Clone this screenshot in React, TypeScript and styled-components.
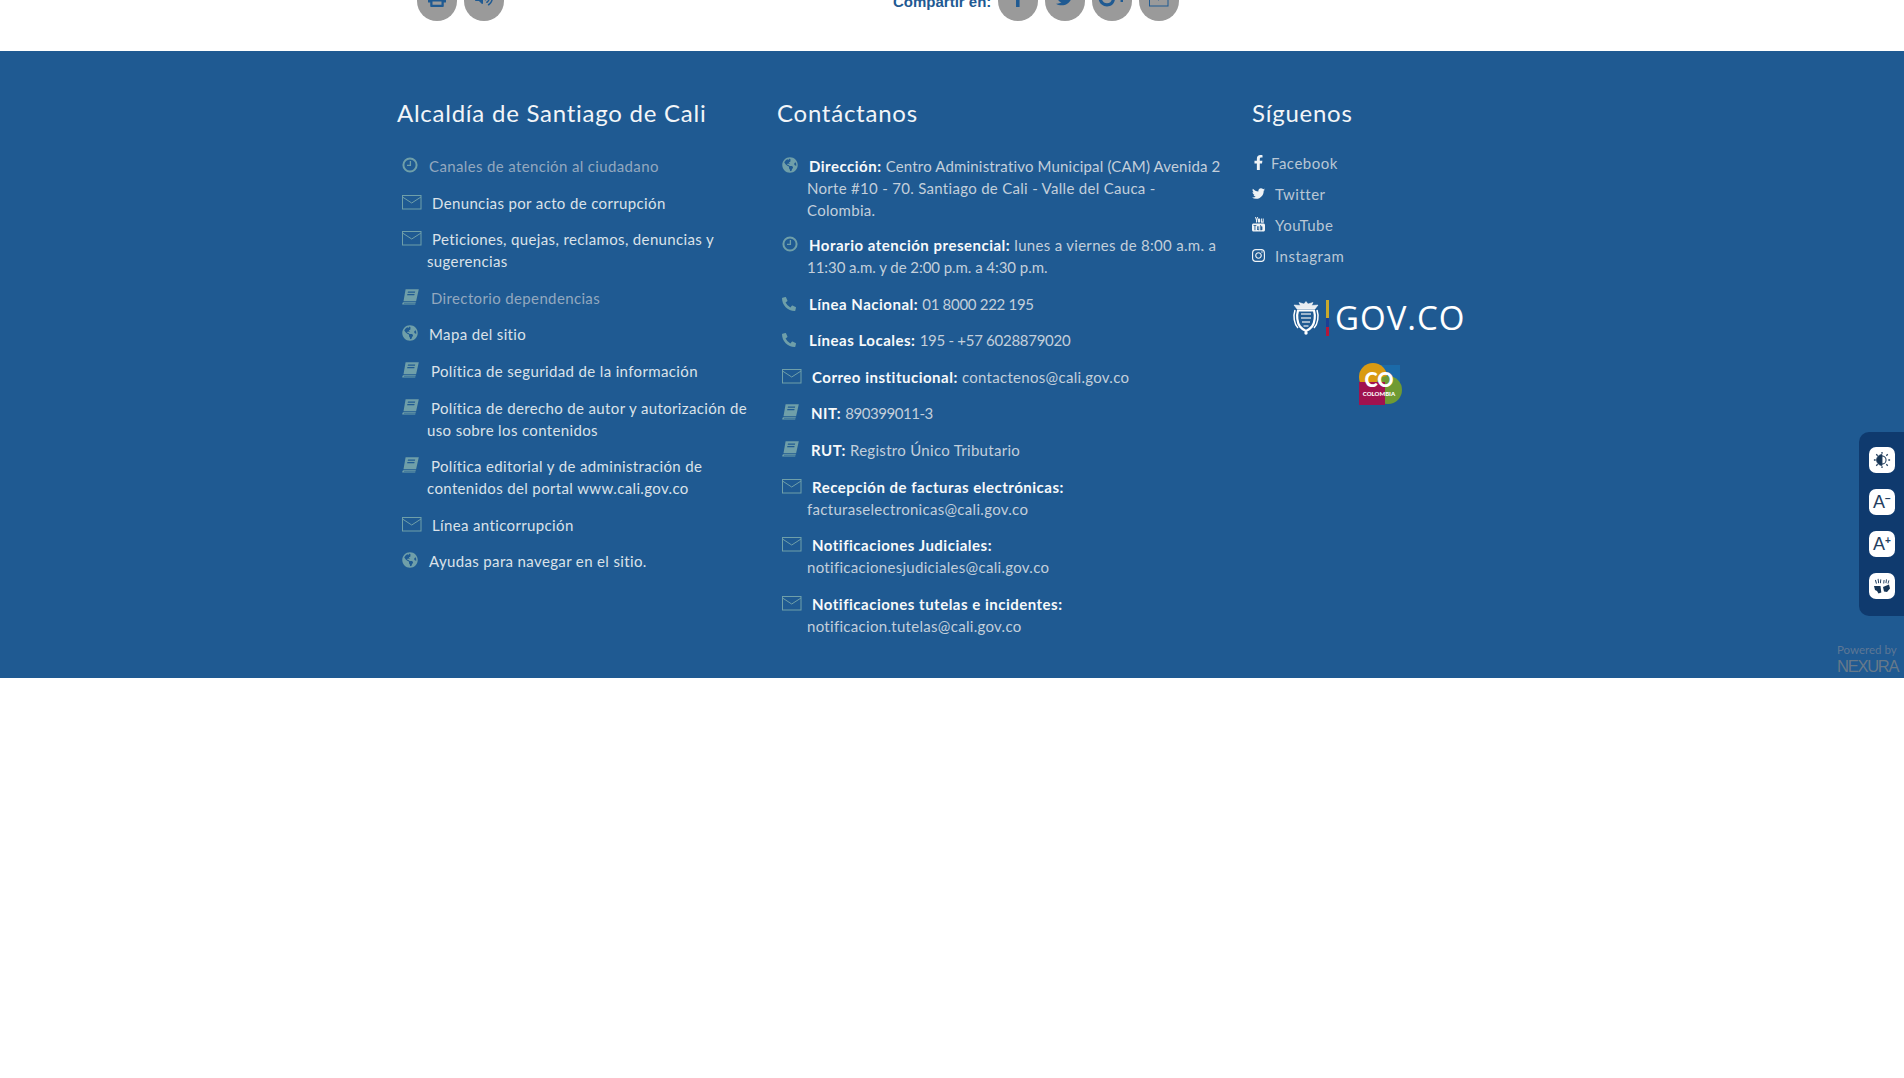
import React from 'react';
import styled, { createGlobalStyle } from 'styled-components';
import {
  FaFacebookF,
  FaGlobeAmericas,
  FaGooglePlusG,
  FaInstagram,
  FaPhoneAlt,
  FaPrint,
  FaTwitter,
  FaVolumeUp,
} from 'react-icons/fa';

const GlobalStyle = createGlobalStyle`
  html, body {
    margin: 0;
    padding: 0;
    background: #fff;
  }
  body {
    font-family: Lato, "Open Sans", sans-serif;
  }
`;

const TopBar = styled.div`
  display: flex;
  align-items: flex-end;
  height: 51px;
  padding: 0 0 30px 417px;
  box-sizing: border-box;
  overflow: hidden;
`;

const CircleGroup = styled.div<{ $width?: number }>`
  display: flex;
  flex: none;
  gap: 7px;
  width: ${(p) => (p.$width ? `${p.$width}px` : 'auto')};
`;

const CircleButton = styled.div<{ $lift?: number }>`
  display: flex;
  flex: none;
  align-items: flex-end;
  justify-content: center;
  width: 40px;
  height: 40px;
  padding-bottom: ${(p) => p.$lift ?? 14}px;
  box-sizing: border-box;
  border-radius: 50%;
  background: #9a9a9a;
  color: #1f5a92;
  font-size: 18px;
`;

const ShareLabel = styled.span`
  flex: none;
  width: 99px;
  margin-right: 6px;
  padding-bottom: 11px;
  font-family: "Liberation Sans", sans-serif;
  font-size: 15px;
  font-weight: 700;
  line-height: 16px;
  color: #1f5a92;
  white-space: nowrap;
`;

const Footer = styled.footer`
  position: relative;
  display: grid;
  grid-template-columns: 380px 475px 1fr;
  height: 627px;
  padding: 43px 0 0 397px;
  box-sizing: border-box;
  background: #1f5a92;
`;

const Heading = styled.h3`
  margin: 0 0 23px;
  font-size: 24px;
  font-weight: 400;
  line-height: 38px;
  letter-spacing: 0.75px;
  color: #f2f5f8;
  white-space: nowrap;
`;

const List = styled.ul`
  margin: 0;
  padding: 0;
  list-style: none;
`;

const Item = styled.li<{ $dim?: boolean; $after?: number }>`
  margin-bottom: ${(p) => p.$after ?? 14.6}px;
  padding-left: 30px;
  font-size: 15px;
  line-height: 22px;
  letter-spacing: 0.36px;
  color: ${(p) => (p.$dim ? '#93a8bf' : '#dbe2e9')};
  white-space: nowrap;
`;

const ContactItem = styled(Item)`
  letter-spacing: 0.3px;
  color: #c3cfdb;
`;

const Label = styled.strong`
  font-weight: 700;
  letter-spacing: 0.5px;
  color: #f7f9fa;
`;

const Value = styled.span<{ $spacing: number }>`
  letter-spacing: ${(p) => p.$spacing}px;
`;

const IconSlot = styled.span<{ $width: number }>`
  display: inline-flex;
  align-items: center;
  width: ${(p) => p.$width}px;
  height: 16px;
  margin-left: -25px;
  vertical-align: -1px;
  color: #6f9fa9;
  font-size: 16px;
`;

const SocialItem = styled.li<{ $gap: number }>`
  display: flex;
  align-items: center;
  height: 31px;
  font-size: 15px;
  letter-spacing: 0.5px;
  color: #b9c7d5;
  gap: ${(p) => p.$gap}px;
`;

const SocialIcon = styled.span`
  display: inline-flex;
  justify-content: center;
  width: 13px;
  color: #eef2f5;
  font-size: 15px;
`;

const SocialColumn = styled.div`
  display: flex;
  flex-direction: column;
`;

const SocialList = styled.ul`
  margin: -8px 0 0;
  padding: 0;
  list-style: none;
`;

const GovLogo = styled.div`
  display: flex;
  align-items: center;
  width: 220px;
  margin: 29px 0 0 40px;
`;

const Flag = styled.span`
  width: 3px;
  height: 36px;
  margin: 0 6px 0 6px;
  background: linear-gradient(#c9a92c 0 50%, #1c3f94 50% 75%, #b3173a 75%);
`;

const GovText = styled.span`
  font-family: "Open Sans", sans-serif;
  font-size: 33px;
  line-height: 36px;
  letter-spacing: 1px;
  color: #fff;
`;

const ColombiaMark = styled.svg`
  display: block;
  margin: 27px 0 0 106px;
`;

const SideTools = styled.div`
  position: absolute;
  top: 381px;
  right: 0;
  display: flex;
  flex-direction: column;
  gap: 16px;
  width: 45px;
  padding: 15px 10px 17px;
  box-sizing: border-box;
  border-radius: 10px 0 0 10px;
  background: #0f3a6e;
`;

const ToolButton = styled.div`
  display: flex;
  align-items: center;
  justify-content: center;
  width: 26px;
  height: 26px;
  border-radius: 7px;
  background: #fff;
  color: #24405f;
`;

const ToolLetter = styled.span`
  font-family: "Liberation Sans", sans-serif;
  font-size: 18px;
  line-height: 1;
`;

const ToolSup = styled.sup`
  font-size: 10px;
  font-weight: 700;
  line-height: 0;
  vertical-align: 6px;
`;

const PoweredBy = styled.div`
  position: absolute;
  right: 4px;
  bottom: 3px;
  display: flex;
  flex-direction: column;
  width: 63px;
  font-size: 11.5px;
  line-height: 14px;
  color: #5d7795;
  overflow: hidden;
`;

const NexuraWord = styled.span`
  font-family: "Liberation Sans", sans-serif;
  font-size: 16.5px;
  line-height: 18px;
  letter-spacing: -1.25px;
  color: #66798a;
`;

const ClockIcon = () => (
  <svg width="16" height="16" viewBox="0 0 16 16" fill="none" stroke="currentColor">
    <circle cx="8" cy="8" r="6.6" strokeWidth="2" />
    <path d="M8.4 4v4.4H5" strokeWidth="1.3" />
  </svg>
);

const MailIcon = () => (
  <svg width="20" height="15" viewBox="0 0 20 15" fill="none" stroke="currentColor" strokeWidth="1">
    <rect x="0.5" y="0.5" width="18.500" height="13.500" />
    <path d="M0.5 2l9.2 6 9.3-6" />
  </svg>
);

const BookIcon = () => (
  <svg width="17" height="16" viewBox="0 0 17 16" fill="currentColor">
    <path
      fillRule="evenodd"
      d="M3.600 0.300H16.800L14.100 12.300H1.500zM6 2.400l-.3 1.400h7.200l.3-1.400zM5.400 5l-.3 1.300h7.200l.3-1.300z"
    />
    <path d="M1 13.200h12.800l-.2 1H2l-.1.500h11.500l-.2.900H0.200L.4 14.200z" />
  </svg>
);

const YoutubeIcon = () => (
  <svg width="13" height="15" viewBox="0 0 13 15" fill="currentColor">
    <path d="M3 0h1l.6 2L5.200 0h1L5 3.300V5.500H4V3.300zM7 1.500c.8 0 1.200.4 1.200 1.100v1.800c0 .7-.4 1.100-1.200 1.100s-1.200-.4-1.200-1.100V2.600c0-.7.4-1.100 1.200-1.100zM9 1.500h.9v3l.8-.1V1.500h1v4.300h-1v-.4c-.9.7-1.700.6-1.700-.4z" />
    <path
      fillRule="evenodd"
      d="M1.500 6.500h10c.8 0 1.500.7 1.500 1.500v5c0 .8-.7 1.500-1.500 1.500h-10C.7 14.500 0 13.800 0 13V8c0-.8.7-1.500 1.500-1.500zM1.500 8v.8h1v4.500h.9V8.800h1V8zm3.500 1.300v3.300c0 .6.700.7 1.400.2v.5h.8v-4h-.8v2.900c-.3.2-.6.300-.6 0V9.300zm3.300-1.300v5.300h.8v-.3c.7.6 1.300.2 1.300-.5V10c0-.8-.7-1-1.300-.4V8z"
    />
  </svg>
);

const ContrastIcon = () => (
  <svg width="18" height="18" viewBox="0 0 20 20" stroke="#24405f" fill="none">
    <circle cx="10" cy="10" r="4.500" strokeWidth="1.200" />
    <path d="M10 4a6 6 0 0 0 0 12z" fill="#163556" />
    <path d="M10 1v2M10 17v2M1 10h2M17 10h2M3.600 3.600l1.600 1.600M14.800 14.800l1.600 1.600M3.600 16.400l1.600-1.600M14.800 5.200l1.600-1.600" strokeWidth="1.400" />
  </svg>
);

const SignIcon = () => (
  <svg width="18" height="16" viewBox="0 0 18 16" fill="#163556">
    <path d="M1 8h6.500l.8 6.500-2.800 1-1.500-2.500L2 12z" />
    <path d="M10 9l6-2.500 1 4-3 3.500-3-.5z" />
    <path d="M2 2.200l.9-.4 1 3.600-.9.300zM4.600 1l.9-.2.6 4.300-.9.100zM7.400 1.300l.9.200-.5 3.700-.9-.2zM10.600 2l.9.100-.3 3.400-.9-.1zM13 1.200l.9.200-.5 3.900-.9-.2zM15.600 2.200l.8.300-1.100 3.200-.8-.3z" />
  </svg>
);

const EmblemIcon = () => (
  <svg width="28" height="34" viewBox="0 0 28 34" fill="none" stroke="#fff">
    <path d="M14 0.500l2 2.500 5-1.500-1.500 3 6.500-.5-3 4H5L2 4l6.500.5L7 1.500l5 1.500z" fill="#e8edf2" strokeWidth="0.5" />
    <path d="M6 9.500h16c1.500 5 1 12-2 16-1.500 2-4 3.500-6 4.500-2-1-4.500-2.500-6-4.500-3-4-3.500-11-2-16z" strokeWidth="2.200" />
    <path d="M9 13h10M9 17h10M10 21h8M11.500 25h5" strokeWidth="1.300" stroke="#c8d3df" />
    <path d="M3 9c-2 6-1 14 3 18M25 9c2 6 1 14-3 18" strokeWidth="1.500" />
    <circle cx="14" cy="32" r="1.700" fill="#fff" stroke="none" />
  </svg>
);

const institutionItems = [
  { icon: 'clock', lines: ['Canales de atención al ciudadano'], dim: true },
  { icon: 'mail', lines: ['Denuncias por acto de corrupción'] },
  { icon: 'mail', lines: ['Peticiones, quejas, reclamos, denuncias y', 'sugerencias'] },
  { icon: 'book', lines: ['Directorio dependencias'], dim: true },
  { icon: 'globe', lines: ['Mapa del sitio'] },
  { icon: 'book', lines: ['Política de seguridad de la información'] },
  { icon: 'book', lines: ['Política de derecho de autor y autorización de', 'uso sobre los contenidos'] },
  { icon: 'book', lines: ['Política editorial y de administración de', 'contenidos del portal www.cali.gov.co'] },
  { icon: 'mail', lines: ['Línea anticorrupción'] },
  { icon: 'globe', lines: ['Ayudas para navegar en el sitio.'] },
];

const contactItems: {
  icon: string;
  label: string;
  lines: string[];
  spacing?: (number | undefined)[];
  after?: number;
}[] = [
  {
    icon: 'globe',
    label: 'Dirección:',
    lines: ['Centro Administrativo Municipal (CAM) Avenida 2', 'Norte #10 - 70. Santiago de Cali - Valle del Cauca -', 'Colombia.'],
    spacing: [0.17],
    after: 13,
  },
  {
    icon: 'clock',
    label: 'Horario atención presencial:',
    lines: ['lunes a viernes de 8:00 a.m. a', '11:30 a.m. y de 2:00 p.m. a 4:30 p.m.'],
    spacing: [undefined, -0.05],
  },
  { icon: 'phone', label: 'Línea Nacional:', lines: ['01 8000 222 195'], spacing: [-0.3] },
  { icon: 'phone', label: 'Líneas Locales:', lines: ['195 - +57 6028879020'], spacing: [-0.28] },
  { icon: 'mail', label: 'Correo institucional:', lines: ['contactenos@cali.gov.co'] },
  { icon: 'book', label: 'NIT:', lines: ['890399011-3'], spacing: [-0.45] },
  { icon: 'book', label: 'RUT:', lines: ['Registro Único Tributario'] },
  { icon: 'mail', label: 'Recepción de facturas electrónicas:', lines: ['', 'facturaselectronicas@cali.gov.co'] },
  { icon: 'mail', label: 'Notificaciones Judiciales:', lines: ['', 'notificacionesjudiciales@cali.gov.co'] },
  { icon: 'mail', label: 'Notificaciones tutelas e incidentes:', lines: ['', 'notificacion.tutelas@cali.gov.co'] },
];

const slotWidths: Record<string, number> = { clock: 27, globe: 27, mail: 30, book: 29, phone: 27 };

const RowIcon: React.FC<{ name: string }> = ({ name }) => (
  <IconSlot $width={slotWidths[name]}>
    {name === 'clock' && <ClockIcon />}
    {name === 'globe' && <FaGlobeAmericas />}
    {name === 'mail' && <MailIcon />}
    {name === 'book' && <BookIcon />}
    {name === 'phone' && <FaPhoneAlt size={14} />}
  </IconSlot>
);

const Lines: React.FC<{ lines: string[]; spacing?: (number | undefined)[] }> = ({ lines, spacing }) => (
  <>
    {lines.map((line, i) => {
      const lineSpacing = spacing?.[i];
      return (
        <React.Fragment key={i}>
          {i > 0 && <br />}
          {lineSpacing !== undefined ? <Value $spacing={lineSpacing}>{line}</Value> : line}
        </React.Fragment>
      );
    })}
  </>
);

const App: React.FC = () => (
  <>
    <GlobalStyle />
    <TopBar>
      <CircleGroup $width={476}>
        <CircleButton>
          <FaPrint />
        </CircleButton>
        <CircleButton>
          <FaVolumeUp />
        </CircleButton>
      </CircleGroup>
      <ShareLabel>Compartir en:</ShareLabel>
      <CircleGroup>
        <CircleButton>
          <FaFacebookF />
        </CircleButton>
        <CircleButton>
          <FaTwitter />
        </CircleButton>
        <CircleButton $lift={9}>
          <FaGooglePlusG size={28} />
        </CircleButton>
        <CircleButton>
          <MailIcon />
        </CircleButton>
      </CircleGroup>
    </TopBar>
    <Footer>
      <div>
        <Heading>Alcaldía de Santiago de Cali</Heading>
        <List>
          {institutionItems.map((item) => (
            <Item key={item.lines[0]} $dim={item.dim}>
              <RowIcon name={item.icon} />
              <Lines lines={item.lines} />
            </Item>
          ))}
        </List>
      </div>
      <div>
        <Heading>Contáctanos</Heading>
        <List>
          {contactItems.map((item) => (
            <ContactItem key={item.label} $after={item.after}>
              <RowIcon name={item.icon} />
              <Label>{item.label}</Label> <Lines lines={item.lines} spacing={item.spacing} />
            </ContactItem>
          ))}
        </List>
      </div>
      <SocialColumn>
        <Heading>Síguenos</Heading>
        <SocialList>
          <SocialItem $gap={6}>
            <SocialIcon>
              <FaFacebookF />
            </SocialIcon>
            Facebook
          </SocialItem>
          <SocialItem $gap={10}>
            <SocialIcon>
              <FaTwitter />
            </SocialIcon>
            Twitter
          </SocialItem>
          <SocialItem $gap={10}>
            <SocialIcon>
              <YoutubeIcon />
            </SocialIcon>
            YouTube
          </SocialItem>
          <SocialItem $gap={10}>
            <SocialIcon>
              <FaInstagram />
            </SocialIcon>
            Instagram
          </SocialItem>
        </SocialList>
        <GovLogo>
          <EmblemIcon />
          <Flag />
          <GovText>GOV.CO</GovText>
        </GovLogo>
        <ColombiaMark width="44" height="42" viewBox="0 0 44 42">
          <rect x="20" y="2" width="22" height="22" fill="#1b6aa8" />
          <circle cx="15" cy="14" r="14" fill="#d99a12" />
          <circle cx="30" cy="27" r="14" fill="#6f9a33" />
          <rect x="1" y="19" width="26" height="23" fill="#a0124f" />
          <text x="21" y="24" textAnchor="middle" fontFamily="Lato, sans-serif" fontWeight="900" fontSize="20" fill="#fff">
            CO
          </text>
          <text x="21" y="33" textAnchor="middle" fontFamily="Lato, sans-serif" fontWeight="900" fontSize="6" fill="#fff">
            COLOMBIA
          </text>
        </ColombiaMark>
      </SocialColumn>
      <SideTools>
        <ToolButton>
          <ContrastIcon />
        </ToolButton>
        <ToolButton>
          <ToolLetter>
            A<ToolSup>−</ToolSup>
          </ToolLetter>
        </ToolButton>
        <ToolButton>
          <ToolLetter>
            A<ToolSup>+</ToolSup>
          </ToolLetter>
        </ToolButton>
        <ToolButton>
          <SignIcon />
        </ToolButton>
      </SideTools>
      <PoweredBy>
        <span>Powered by</span>
        <NexuraWord>NEXURA</NexuraWord>
      </PoweredBy>
    </Footer>
  </>
);

export default App;
